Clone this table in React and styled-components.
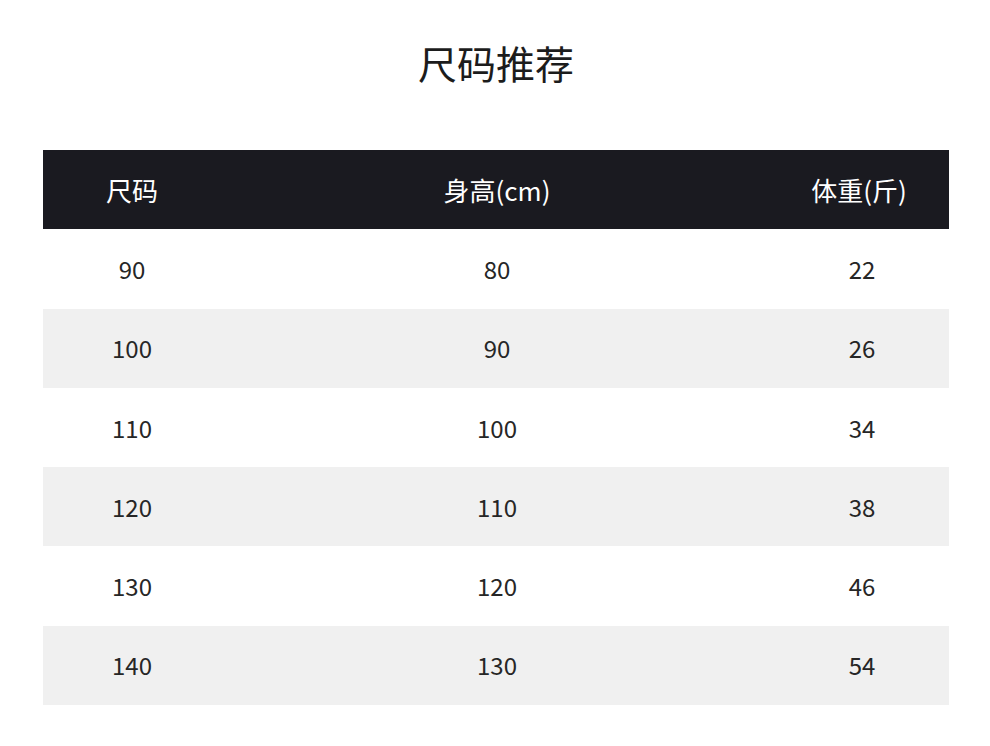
import React from "react";
import styled, { createGlobalStyle } from "styled-components";

const GlobalStyle = createGlobalStyle`
  body {
    margin: 0;
    background: #ffffff;
    font-family: "Noto Sans CJK SC", "Noto Sans", sans-serif;
  }
`;

const Page = styled.div`
  width: 990px;
  padding: 40px 0 0 43px;
  box-sizing: border-box;
`;

const Title = styled.h1`
  width: 906px;
  margin: 0 0 66px;
  font-size: 39px;
  line-height: 44px;
  font-weight: 400;
  color: #1c1c1c;
  text-align: center;
`;

const Table = styled.div`
  width: 906px;
  display: flex;
  flex-direction: column;
`;

const Row = styled.div`
  display: grid;
  grid-template-columns: 178px 552px 172px;
  height: 79.3px;
  align-items: center;
  background: ${(p) => (p.$head ? "#1a1a20" : p.$shade ? "#f0f0f0" : "#ffffff")};
  color: ${(p) => (p.$head ? "#ffffff" : "#262626")};
`;

const Cell = styled.div`
  text-align: center;
  font-size: ${(p) => (p.$head ? "26px" : "24px")};
  font-weight: 400;
  line-height: 30px;
  padding-left: ${(p) => (p.$num ? "6px" : "0")};
`;

const rows = [
  ["90", "80", "22"],
  ["100", "90", "26"],
  ["110", "100", "34"],
  ["120", "110", "38"],
  ["130", "120", "46"],
  ["140", "130", "54"],
];

const heads = ["尺码", "身高(cm)", "体重(斤)"];

export default function App() {
  return (
    <>
      <GlobalStyle />
      <Page>
        <Title>尺码推荐</Title>
        <Table>
          <Row $head>
            {heads.map((h) => (
              <Cell key={h} $head>
                {h}
              </Cell>
            ))}
          </Row>
          {rows.map((r, i) => (
            <Row key={r[0]} $shade={i % 2 === 1}>
              {r.map((v, j) => (
                <Cell key={j} $num={j === 2}>
                  {v}
                </Cell>
              ))}
            </Row>
          ))}
        </Table>
      </Page>
    </>
  );
}
